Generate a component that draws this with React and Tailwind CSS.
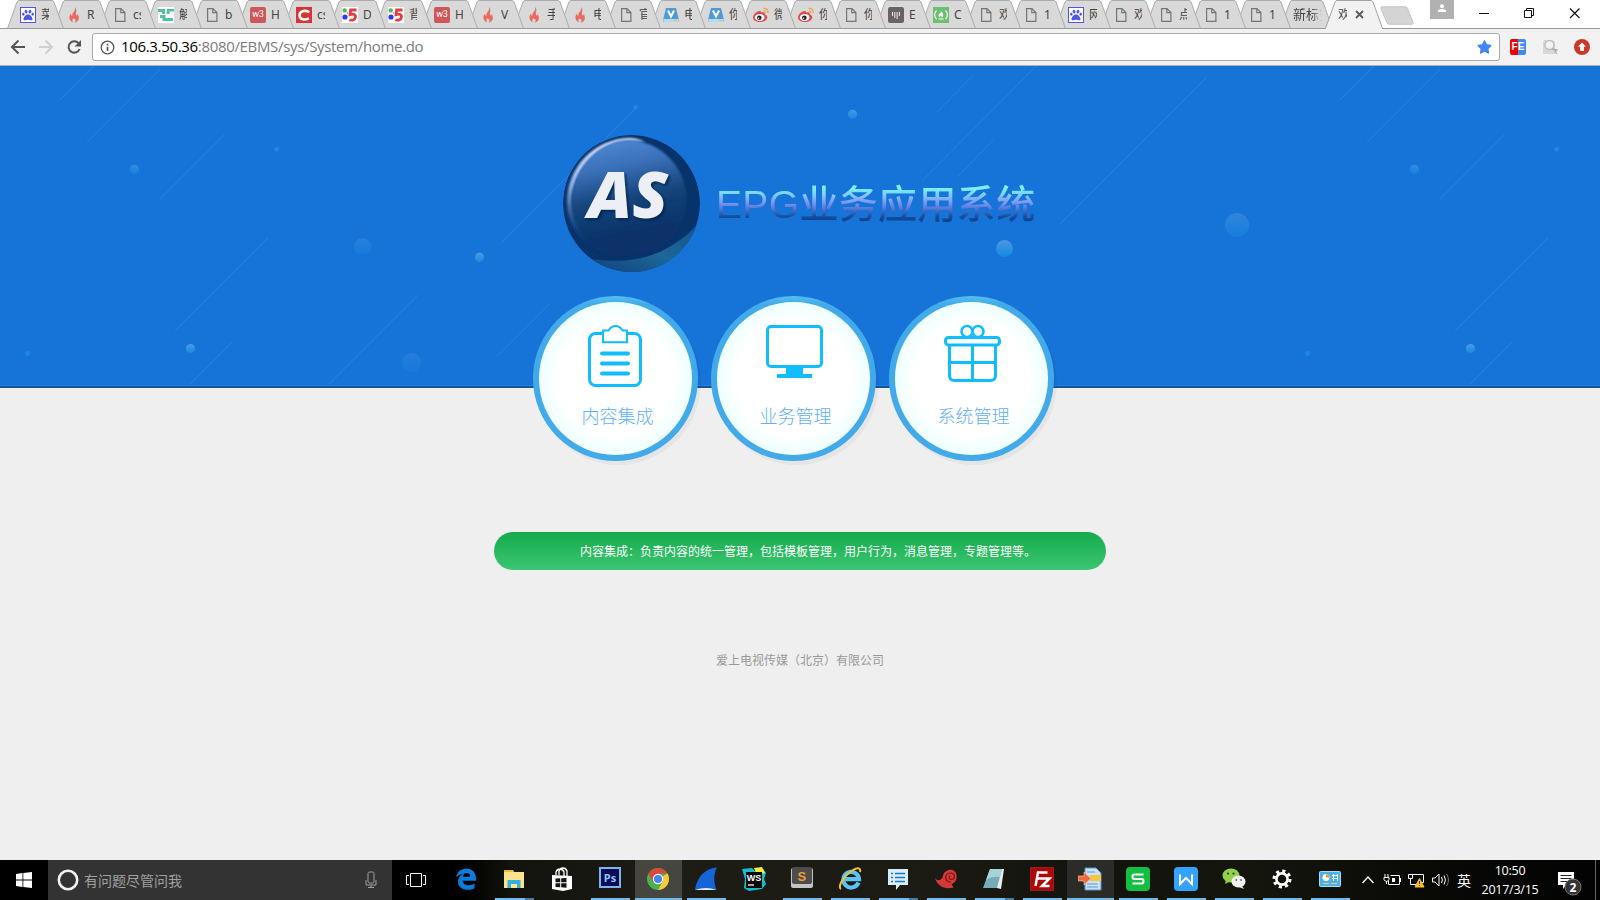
import React from "react";
import { FaPaw, FaStar } from "react-icons/fa";

/* ---------- favicons ---------- */

const Baidu = () => (
  <span className="flex h-4 w-4 items-center justify-center border border-[#4f57e8] bg-white">
    <FaPaw className="h-3 w-3 text-[#4f57e8]" />
  </span>
);
const Fire = () => (
  <svg className="h-4 w-4" viewBox="0 0 16 16">
    <path d="M9 0c.6 2.600-.6 4-1.700 5.400C6.300 7 6 8 6.500 9.300 5.400 8.800 5 7.600 5.100 6.600 3.600 8.200 3 10 3.700 12c.6 1.900 2 3.100 3.500 3.600-1.500-1.700-1-3.200.4-4.500.1 1.200.9 1.500 1.400 1 .9 1.100.6 2.400-.3 3.600 2.700-.7 4.300-2.700 4.200-5 0-1.500-.8-2.500-.9-3.800-.8.500-1 1.300-.9 2.100C10 8 9.600 7 10 5.400 10.600 3.200 10.600 1.500 9 0z" fill="#ea6a62" />
  </svg>
);
const Doc = () => (
  <svg className="h-4 w-4" viewBox="0 0 16 16" fill="none" stroke="#757575" strokeWidth="1.200">
    <path d="M3.600 1.600h5.400l3.900 3.900v8.900H3.600z M8.800 1.600v4.100h4.100" />
  </svg>
);
const Teal = () => (
  <svg className="h-4 w-4" viewBox="0 0 16 16">
    <rect width="16" height="16" fill="#fff" />
    <path d="M0 2h7v5H4V5H0zM9 2h7v2.500h-4.500V7H8.500zM2 8h5.500v3H15v3H4.500V11H2z" fill="#4fc0a2" />
  </svg>
);
const W3 = () => (
  <span className="flex h-4 w-4 items-center justify-center rounded-[2px] bg-[#cf5659] font-['Roboto',sans-serif] text-[9px] leading-none tracking-tight text-white">w3</span>
);
const CRed = () => (
  <svg className="h-4 w-4" viewBox="0 0 16 16">
    <rect width="16" height="16" fill="#d93434" />
    <path d="M13.300 5.300C10.500 3 3.800 3.200 3.500 8.200c-.2 4.800 5.500 5 9.500 3.200" fill="none" stroke="#fff" strokeWidth="2.600" />
  </svg>
);
const Five = () => (
  <svg className="h-4 w-4" viewBox="0 0 16 16">
    <rect width="16" height="16" fill="#fff" />
    <circle cx="2.700" cy="3.400" r="2.200" fill="#5cb55c" />
    <circle cx="3" cy="10" r="2.600" fill="#3038ff" />
    <circle cx="5.500" cy="6" r=".8" fill="#e66" />
    <path d="M14.500 3H8.600l-.5 4.600c3.500-1 5.700 0 5.300 2.600-.4 2.800-3.200 3.600-6 2.500" fill="none" stroke="#df3f44" strokeWidth="2.800" />
  </svg>
);
const Disk = () => (
  <svg className="h-4 w-4" viewBox="0 0 16 16">
    <path d="M3 1h10l2.500 10V15H.5V11z" fill="#4f9bd8" />
    <path d="M.5 12h15v3H.5z" fill="#b7d8ef" />
    <rect x="11" y="13" width="3" height="1" fill="#e8c53a" />
    <path d="M5 3.500l3 6 3-6" fill="none" stroke="#fff" strokeWidth="2" />
  </svg>
);
const Weibo = () => (
  <svg className="h-4 w-4" viewBox="0 0 16 16">
    <path d="M6.800 4C4 4 0 7.200 0 10.500 0 13.300 3.200 15 7 15c4 0 7.300-2.200 7.300-4.800 0-1.800-1.600-2.600-2.600-2.800.6-2-.8-2.900-3.700-1.800C8.300 4.500 8 4 6.800 4z" fill="#e24b4f" />
    <ellipse cx="6.700" cy="10.500" rx="4.800" ry="3.400" fill="#fff" />
    <circle cx="6.300" cy="10.700" r="2.300" fill="#222" />
    <circle cx="5.600" cy="11.200" r=".8" fill="#fff" />
    <path d="M10.500 1.400c3-.5 5 1.600 4.600 4.600M10.800 4c1.400-.2 2.100.6 2 1.900" fill="none" stroke="#f0a43c" strokeWidth="1.300" />
  </svg>
);
const Bars = () => (
  <svg className="h-4 w-4" viewBox="0 0 16 16">
    <rect width="16" height="16" rx="2" fill="#6b6269" />
    <path d="M4.500 5v4M6.800 5v6M9.100 5v7M11.400 5v4" stroke="#eee" strokeWidth="1" />
  </svg>
);
const Camp = () => (
  <svg className="h-4 w-4" viewBox="0 0 16 16">
    <rect width="16" height="16" fill="#6abf70" />
    <path d="M3.500 3.500C1 6 1 9.500 3.500 12M12.500 3.500C15 6 15 9.500 12.500 12M5.500 12h5" fill="none" stroke="#fff" strokeWidth="1.100" />
    <path d="M8 4c.5 1.500 2.600 2.500 2.200 4.500C10 10 9 10.500 8.500 10.500 9 9 8 9 7.600 8c0 1-.8 1.400-.2 2.500C5 10 5.300 7.500 6.700 6.500 7.500 6 8 5 8 4z" fill="#fff" />
  </svg>
);

const TABS = [
  [Baidu, "菜"], [Fire, "R"], [Doc, "cs"], [Teal, "解"], [Doc, "b"], [W3, "H"], [CRed, "cs"],
  [Five, "D"], [Five, "背"], [W3, "H"], [Fire, "V"], [Fire, "手"], [Fire, "电"], [Doc, "官"],
  [Disk, "电"], [Disk, "你"], [Weibo, "微"], [Weibo, "你"], [Doc, "你"], [Bars, "E"], [Camp, "C"],
  [Doc, "欢"], [Doc, "1"], [Baidu, "网"], [Doc, "欢"], [Doc, "点"], [Doc, "1"], [Doc, "1"],
];

function TabShape({ w, active }) {
  const d = `M0.500 28.500 L10 2 Q10.800 0.500 12 0.500 H${w - 12} Q${w - 10.800} 0.500 ${w - 10} 2 L${w - 0.500} 28.500`;
  return (
    <svg className="absolute inset-0" width={w} height="29">
      <path d={d} fill={active ? "#f2f2f2" : "#d9d9d9"} stroke={active ? "#a3a3a3" : "#acacac"} strokeWidth="1" />
      {active ? <path d={`M1 28.500H${w - 1}`} stroke="#f2f2f2" /> : <path d={`M0 28.500H${w}`} stroke="#999" />}
    </svg>
  );
}

function TabStrip() {
  return (
    <div className="flex h-[29px] bg-white pl-[7px] font-['Noto_Sans','Noto_Sans_CJK_SC',sans-serif] text-[12px] text-[#444] shadow-[inset_0_-1px_0_#999]">
      {TABS.map(([Icon, label], i) => (
        <div key={i} className={"relative -mr-[11px] h-[29px] shrink-0 " + (i < 13 ? "w-[57px]" : "w-[56px]")} style={{ zIndex: 40 - i }}>
          <TabShape w={i < 13 ? 57 : 56} />
          <div className="relative flex h-[29px] items-center pl-[13px]">
            <Icon />
            <span className="ml-[5px] w-[8px] overflow-hidden whitespace-nowrap">{label}</span>
          </div>
        </div>
      ))}
      <div className="relative -mr-[8px] h-[29px] w-[53px] shrink-0">
        <TabShape w={53} />
        <div className="relative flex h-[29px] items-center pl-[13px] text-[13px]">
          <span className="w-[29px] overflow-hidden whitespace-nowrap [mask-image:linear-gradient(90deg,#000_65%,transparent)]">新标签</span>
        </div>
      </div>
      <div className="relative z-50 h-[29px] w-[58px] shrink-0">
        <TabShape w={58} active />
        <div className="relative flex h-[29px] items-center pl-[13px]">
          <span className="w-[9px] overflow-hidden whitespace-nowrap">欢</span>
          <svg className="ml-[8px] h-[9px] w-[9px]" viewBox="0 0 9 9"><path d="M1 1l7 7M8 1L1 8" stroke="#5a5a5a" strokeWidth="1.800" /></svg>
        </div>
      </div>
      <svg className="-ml-[4px] mt-[6px] shrink-0" width="38" height="20">
        <path d="M3 .8h23q2 0 2.600 1.500l5.400 14q.7 2-1.200 2H10.500q-2 0-2.600-1.600L1.900 2.500Q1.300 .8 3 .8z" fill="#d4d4d4" stroke="#c6c6c6" />
      </svg>
      <div className="ml-auto flex">
        <div className="flex h-[19px] w-[24px] justify-center bg-[#b1b1b1] pt-[4px]">
          <svg width="8" height="9" viewBox="0 0 8 9"><circle cx="4" cy="2.200" r="2" fill="#fff" /><path d="M0 8V6.700Q0 5 4 5T8 6.700V8z" fill="#fff" /></svg>
        </div>
        <svg className="mr-[10px]" width="136" height="28" viewBox="0 0 136 28" fill="none" stroke="#111" strokeWidth="1">
          <path d="M25 13.500h10M70.500 10.500h7v7h-7zM72.500 10.500v-2h7v7h-2" />
          <path d="M116 8.500l9.500 9.500M125.500 8.500L116 18" strokeWidth="1.200" />
        </svg>
      </div>
    </div>
  );
}

function Toolbar() {
  return (
    <div className="flex h-[37px] items-center border-b border-[#a9b0ba] bg-[#f2f2f2] pl-[10px]">
      <svg width="74" height="20" viewBox="0 0 74 20" fill="none" strokeWidth="2">
        <path d="M15 10H2.500M8.500 3.500L2 10l6.500 6.500" stroke="#555" />
        <path d="M29 10h12.500M35.500 3.500L42 10l-6.500 6.500" stroke="#d0d0d0" />
        <path d="M68.600 6.200A5.700 5.700 0 1 0 69.600 12" stroke="#555" />
        <path d="M71 3v6.500h-6.500z" fill="#555" />
      </svg>
      <div className="ml-[8px] flex h-[28px] w-[1408px] items-center rounded-[3px] border border-[#a8a8a8] bg-white pl-[7px]">
        <svg width="15" height="15" viewBox="0 0 15 15"><circle cx="7.500" cy="7.500" r="6.300" fill="none" stroke="#555" strokeWidth="1.300" /><path d="M7.500 6.700v4.300M7.500 3.800v1.600" stroke="#555" strokeWidth="1.700" /></svg>
        <span className="mb-[2px] ml-[6px] whitespace-nowrap font-['Open_Sans','Noto_Sans',sans-serif] text-[15px] leading-none tracking-[-0.33px] text-[#7b7b7b]">
          <span className="text-black">106.3.50.36</span>:8080/EBMS/sys/System/home.do
        </span>
        <FaStar className="ml-auto mr-[7px] h-[14px] w-[15px] text-[#4285f4]" />
      </div>
      <div className="ml-[10px] flex gap-[16px]">
        <span className="flex h-4 w-4 items-center justify-center rounded-[2px] bg-[linear-gradient(90deg,#f00000_50%,#3f8bf5_50%)] font-['Liberation_Sans',sans-serif] text-[10px] font-bold leading-none text-white">FE</span>
        <svg width="16" height="16" viewBox="0 0 16 16"><path d="M2 1h9l2 3v9l1 2H1V3z" fill="#d8d8d8" /><circle cx="7.500" cy="6" r="4.500" fill="#f3f3f3" stroke="#bdbdbd" strokeWidth="1.400" /><path d="M10 10l5 1-2 1 2 3" stroke="#aaa" fill="none" strokeWidth="1.300" /></svg>
        <svg width="16" height="16" viewBox="0 0 16 16"><circle cx="8" cy="8" r="8" fill="#c73a2b" /><path d="M8 3.500l4 4.200H9.800V12H6.200V7.700H4z" fill="#fff" /></svg>
      </div>
    </div>
  );
}

/* ---------- page ---------- */

const LINES = [
  [60, 34, 94, 0], [87, 76, 160, 3], [160, 133, 224, 69], [175, 265, 268, 172], [190, 318, 232, 276],
  [329, 318, 418, 229], [501, 177, 635, 43], [497, 290, 550, 237], [937, 46, 973.500, 9],
  [922, 115, 1036, 0], [957, 111, 993.500, 74], [1060, 158, 1207, 11], [1340, 34, 1374, 0],
  [1367, 76, 1440, 3], [1440, 133, 1504, 69], [1455, 265, 1548, 172], [1470, 318, 1512, 276],
];
const DOTS = [
  [134.500, 103.300, 4.600, 0.6], [276.500, 83.300, 2.500, 0.3], [362.500, 180.500, 8.600, 0.3], [479.500, 191.300, 4.600, 1],
  [190.500, 282.500, 4.600, 1], [27.500, 287.500, 2.500, 0.3], [411.500, 296.500, 9.700, 0.25], [635.400, 41.300, 2.500, 0.4],
  [852.500, 48.300, 4.600, 0.9], [1004.500, 182.500, 8.500, 0.9], [1237, 159, 12, 0.45], [1414.500, 103.300, 4.600, 0.6],
  [1556.500, 83.300, 2.500, 0.3], [1470.500, 282.500, 4.600, 1], [1307.500, 287.500, 2.500, 0.3],
];

function Backdrop() {
  return (
    <svg className="absolute inset-0" width="1600" height="322">
      <defs>
        <linearGradient id="dot" x1="0" y1="0" x2="0" y2="1">
          <stop offset="0" stopColor="#509be0" />
          <stop offset="1" stopColor="#148be6" />
        </linearGradient>
      </defs>
      {LINES.map(([a, b, c, d], i) => <path key={i} d={`M${a} ${b}L${c} ${d}`} stroke="#2389e6" strokeOpacity=".75" strokeWidth="1" />)}
      <path d="M373 251L439 185" stroke="#2380df" strokeOpacity=".4" />
      {DOTS.map(([x, y, r, o], i) => <circle key={i} cx={x} cy={y} r={r} fill={r < 3 ? "#1f9bf0" : "url(#dot)"} fillOpacity={r < 3 ? 0.5 : o} />)}
      <path d="M0 319.500H1600" stroke="#2a7fdc" />
      <path d="M0 321H1600" stroke="#11559f" strokeWidth="2" />
    </svg>
  );
}

function Logo() {
  return (
    <svg width="138" height="138" viewBox="0 0 138 138" className="shrink-0">
      <defs>
        <linearGradient id="face" x1=".4" y1="0" x2=".6" y2="1">
          <stop offset="0" stopColor="#4c86d4" />
          <stop offset=".22" stopColor="#3a70b8" />
          <stop offset=".5" stopColor="#144479" />
          <stop offset=".8" stopColor="#08326a" />
        </linearGradient>
        <linearGradient id="rim" x1=".3" y1="0" x2=".35" y2="1">
          <stop offset="0" stopColor="#eaf2ff" />
          <stop offset=".4" stopColor="#8db3e8" />
          <stop offset=".8" stopColor="#1f4f92" stopOpacity=".4" />
          <stop offset="1" stopColor="#08306a" stopOpacity="0" />
        </linearGradient>
        <linearGradient id="glow" x1="0" y1="1" x2="1" y2="0">
          <stop offset="0" stopColor="#0f3f78" />
          <stop offset=".5" stopColor="#1d6799" />
          <stop offset="1" stopColor="#14508a" />
        </linearGradient>
        <filter id="soft"><feGaussianBlur stdDeviation="1" /></filter>
        <clipPath id="disc"><circle cx="68.500" cy="68.500" r="68.500" /></clipPath>
      </defs>
      <g clipPath="url(#disc)">
        <circle cx="68.500" cy="68.500" r="68.500" fill="#07336b" />
        <path d="M28 124Q76 131 108 111Q128 99 138 84V138H20z" fill="url(#glow)" />
        <path d="M66 3A64 64 0 0 0 4 66C4 90 18 108 36 119L40 115C20 100 9 85 9 66C9 40 32 8 66 6L82 7Q74 3 66 3z" fill="url(#rim)" filter="url(#soft)" />
        <path d="M66 5C96 6 123 30 123.500 64C124 86 114 100 100 112Q70 126 40 119C20 106 9 88 9 66C9 34 36 5 66 5z" fill="url(#face)" filter="url(#soft)" />
      </g>
      <g fontFamily="'Open Sans','Noto Sans',sans-serif" fontWeight="800" fontStyle="italic" fontSize="64">
        <text x="27" y="85" fill="#04204a" opacity=".75" filter="url(#soft)" textLength="80" lengthAdjust="spacingAndGlyphs">AS</text>
        <text x="25" y="82.500" fill="#eceff5" textLength="80" lengthAdjust="spacingAndGlyphs">AS</text>
      </g>
    </svg>
  );
}

const Clipboard = () => (
  <svg width="58" height="64" viewBox="1 0 58 64" fill="none" stroke="#11bcff">
    <rect x="3.500" y="9.500" width="51" height="52" rx="6" strokeWidth="3" />
    <path d="M17 18.300V6.500h5.500C24 4 26 2 29.500 2S35 4 36.500 6.500H41V18.300z" fill="#fff" strokeWidth="2" />
    <path d="M16 29.500h26M16 39.500h26M16 49.500h26" strokeWidth="4" strokeLinecap="round" />
  </svg>
);
const Monitor = () => (
  <svg width="58" height="64" viewBox="-1 0 58 64">
    <rect x="1.500" y="2.500" width="54" height="40" rx="3.500" fill="#fff" stroke="#11bcff" strokeWidth="3" />
    <path d="M20 43h17v7h9v4H11v-4h9z" fill="#11bcff" />
  </svg>
);
const Gift = () => (
  <svg width="58" height="64" viewBox="-1 0 58 64" fill="none" stroke="#11bcff" strokeWidth="3">
    <circle cx="23" cy="7.500" r="5.500" strokeWidth="2.600" />
    <circle cx="34" cy="7.500" r="5.500" strokeWidth="2.600" />
    <path d="M5.500 21v30.500q0 5 5 5h36q5 0 5-5V21M28.500 21v36M5.500 38.500h46" />
    <rect x="1.500" y="13.500" width="54" height="7.500" rx="3" fill="#fff" />
  </svg>
);

function Card({ Icon, label }) {
  return (
    <div className="h-[165px] w-[165px] rounded-full bg-[linear-gradient(180deg,#55bfee_0,#43aaea_5%)] p-[6px] shadow-[3px_4px_0_rgba(0,0,0,0.04)]">
      <div className="flex h-full w-full flex-col items-center rounded-full bg-[radial-gradient(circle_at_50%_50%,#ffffff_52%,#edffff_72%)] pt-[22px]">
        <Icon />
        <span className="ml-[4px] mt-[13px] whitespace-nowrap font-['Noto_Sans_CJK_SC',sans-serif] text-[18px] font-light leading-[28px] text-[#5fb0fa]">{label}</span>
      </div>
    </div>
  );
}

/* ---------- taskbar ---------- */

const Edge = () => (
  <svg width="22" height="22" viewBox="0 0 22 22"><path d="M1 9.500C2 4 6 .5 11.300.5 17 .5 21 4.500 21 10.500v2.200H7.600c.3 3 3 4.500 6 4.500 2.300 0 4.200-.6 5.900-1.600v4.600c-2 1.100-4.200 1.600-6.900 1.600C7 21.800 3 18.500 3 13.500c0-3.200 1.700-5.700 4.500-7.200C4.500 6.500 2.300 7.700 1 9.500zm6.800-.8h7.400c0-2.400-1.200-3.700-3.500-3.700-2 0-3.400 1.300-3.900 3.700z" fill="#0b7bdc" /></svg>
);
const Explorer = () => (
  <svg width="22" height="20" viewBox="0 0 22 20"><path d="M1 1h9l1 2h10v16H1z" fill="#fde38c" /><path d="M1 1h9v2H1z" fill="#f0b93a" /><path d="M4.500 19v-8h13v8h-3.500v-4h-6v4z" fill="#35aee2" /></svg>
);
const Store = () => (
  <svg width="22" height="25" viewBox="0 0 22 25"><path d="M1 8l20 1v13l-9 2L1 22z" fill="#fff" /><path d="M5 8V5q1-3 4-3t4 3v4M8 8V4q1-3 4-3t4 3v5" fill="none" stroke="#fff" strokeWidth="1.300" /><path d="M4.500 11.500l4.700-.3v4H4.500zM10.200 11.200l5.300-.3v4.300h-5.300zM4.500 16.200h4.700v4l-4.700-.3zM10.200 16.200h5.300v4.500l-5.300-.4z" fill="#141410" /></svg>
);
const Ps = () => (
  <span className="mb-[3px] flex h-[21px] w-[22px] items-center justify-center border-2 border-[#7bb5f0] bg-[#0b0a55] font-['Open_Sans',sans-serif] text-[11px] font-bold leading-none text-[#8dc6ff]">Ps</span>
);
const Chrome = () => (
  <svg width="22" height="22" viewBox="0 0 22 22">
    <circle cx="11" cy="11" r="11" fill="#4caf50" />
    <path d="M11 11L1.500 5.500A11 11 0 0 1 20.500 5.500H11z" fill="#d9463a" />
    <path d="M11 11l9.500-5.500A11 11 0 0 1 11 22l5-9z" fill="#fbc934" />
    <path d="M1.500 5.500L6 14l5-3-1-5.500z" fill="#d9463a" />
    <circle cx="11" cy="11" r="5.200" fill="#fff" /><circle cx="11" cy="11" r="4.100" fill="#4285f4" />
  </svg>
);
const Shark = () => (
  <svg width="24" height="24" viewBox="0 0 24 24"><path d="M1 23C3 9 12 1 23 .5 19 8 20 16 22.500 23z" fill="#1565d8" /><path d="M1 23q11-4 21.500 0z" fill="#e2effa" /></svg>
);
const WebStorm = () => (
  <svg width="24" height="24" viewBox="0 0 24 24"><path d="M0 2l10-1 3 3 8-2 3 4-2 6 2 5-4 5-13 2-5-3 1-9z" fill="#14bfd0" /><path d="M12 1l8-1 3 6-8 2z" fill="#f4ee43" /><rect x="4" y="5" width="16" height="16" fill="#080808" /><text x="4.800" y="13.500" fontSize="9" fontWeight="700" fontFamily="'Liberation Sans'" fill="#fff" textLength="14.500" lengthAdjust="spacingAndGlyphs">WS</text><path d="M6 18h6" stroke="#fff" strokeWidth="1.300" /></svg>
);
const Sublime = () => (
  <svg className="-mt-[3px]" width="24" height="22" viewBox="0 0 24 22"><rect x="1" y="1" width="22" height="20" rx="2" fill="#c4c4c4" /><rect x="2" y="0" width="20" height="17" rx="2" fill="#4c4c4c" /><text x="7.500" y="13.500" fontSize="13" fontWeight="700" fontFamily="'Liberation Sans'" fill="#f29a3a">S</text></svg>
);
const Ie = () => (
  <svg width="24" height="24" viewBox="0 0 24 24"><path d="M20.500 15.500A7.800 7.800 0 1 1 21 12.200H7" fill="none" stroke="#5cc3f2" strokeWidth="4.200" /><path d="M3 22C-1 20 6 8 15 3c5-3 8-2 7 2" fill="none" stroke="#f3c22e" strokeWidth="2" /></svg>
);
const Message = () => (
  <svg width="22" height="21" viewBox="0 0 22 21"><path d="M1 0h20v16H13l-4 5v-5H1z" fill="#d9edfb" /><path d="M4 4.500h2M8 4.500h10M4 8.500h2M8 8.500h10M4 12.500h2M8 12.500h10" stroke="#1876cf" strokeWidth="1.600" /></svg>
);
const Snail = () => (
  <svg width="22" height="20" viewBox="0 0 22 20"><path d="M0 9c3 4 7 2 8-2C9 0 20-2 21.500 6c.8 5-2 8-5 9l2 3.500C10 21 2 17 0 9z" fill="#d23a3a" /><path d="M16 13c-7 0-7-9-.5-9 5 0 5 6.500 1 6.500-3 0-3-3.500-1-3.500" fill="none" stroke="#7c1216" strokeWidth="1.200" /></svg>
);
const Notepad = () => (
  <svg width="22" height="22" viewBox="0 0 22 22"><path d="M7 1h14l-3 20-4-1z" fill="#e8efef" /><path d="M7 1h12l-5 19H0z" fill="#74adb8" /><path d="M7 1h12l-2 8Q9 8 3 12z" fill="#a6d2d9" /></svg>
);
const Fz = () => (
  <svg width="24" height="24" viewBox="0 0 24 24"><rect x=".5" y=".5" width="23" height="23" fill="#ad0707" stroke="#dd2a2a" strokeDasharray="1 1" /><path d="M5.500 19L8 5.500h9.500M7 11.500h7M12.500 11.500h7L12 19h7.500" fill="none" stroke="#fff" strokeWidth="2.500" /></svg>
);
const DocArrow = () => (
  <svg width="24" height="24" viewBox="0 0 24 24"><path d="M7 1h11l5 5v17H7z" fill="#c9e2f6" stroke="#5b93cd" /><path d="M9 5h8M9 17h11M9 20h11" stroke="#5a9bdc" /><path d="M12 8h11v6H12z" fill="#f6c443" /><path d="M0 9h6V5l7 6.500L6 18v-4H0z" fill="#ee6a3a" stroke="#fcd0b8" strokeWidth=".6" /></svg>
);
const WpsS = () => (
  <svg width="24" height="24" viewBox="0 0 24 24"><rect width="24" height="24" rx="4" fill="#13bf40" /><path d="M17.500 7.500H8.500q-2 0-2 2.200t2 2.300h7q2 0 2 2.200t-2 2.300H6.500" fill="none" stroke="#fff" strokeWidth="2" /></svg>
);
const WpsW = () => (
  <svg width="24" height="24" viewBox="0 0 24 24"><rect width="24" height="24" rx="4" fill="#34a2ff" /><path d="M6 7.500V17l6-6 6 6V7.500" fill="none" stroke="#fff" strokeWidth="2" /></svg>
);
const WeChat = () => (
  <svg width="24" height="22" viewBox="0 0 24 22"><ellipse cx="9" cy="7.500" rx="8.500" ry="7" fill="#93d14b" /><path d="M4 12l-1 4 4-2z" fill="#93d14b" /><ellipse cx="16.500" cy="13.500" rx="7" ry="6" fill="#f1f1f1" /><path d="M20 18l2 3-5-2z" fill="#f1f1f1" /><circle cx="6" cy="5.500" r="1.100" fill="#333" /><circle cx="11.500" cy="5.500" r="1.100" fill="#333" /><circle cx="14.300" cy="12" r=".9" fill="#666" /><circle cx="19" cy="12" r=".9" fill="#666" /></svg>
);
const Gear = () => (
  <svg width="20" height="20" viewBox="0 0 20 20"><circle cx="10" cy="10" r="5.600" fill="none" stroke="#fff" strokeWidth="2.600" /><circle cx="10" cy="10" r="8" fill="none" stroke="#fff" strokeWidth="3" strokeDasharray="3.140 3.140" /></svg>
);
const Panel = () => (
  <svg width="22" height="16" viewBox="0 0 22 16"><rect x=".5" y=".5" width="21" height="15" rx="1" fill="#4bb0e8" stroke="#a5dcf8" /><circle cx="7" cy="6.500" r="3.500" fill="#fff" /><path d="M7 6.500V3a3.500 3.500 0 0 1 3.500 3.500z" fill="#f29b33" /><path d="M13 4.500h6M13 7.500h6M14.500 3v7M18.500 3v7" stroke="#e9f7ff" /><path d="M4 12.500h14" stroke="#f0d060" strokeDasharray="6 2" /></svg>
);

const APPS = [
  [Edge, 0], [Explorer, 2], [Store, 0], [Ps, 1], [Chrome, 3], [Shark, 1], [WebStorm, 0], [Sublime, 1], [Ie, 1], [Message, 2],
  [Snail, 1], [Notepad, 2], [Fz, 1], [DocArrow, 3], [WpsS, 1], [WpsW, 1], [WeChat, 1], [Gear, 1], [Panel, 1],
];
const BAR = {
  0: "h-[2px] w-0",
  1: "h-[2px] w-[39px] bg-[#76b9ed]",
  2: "h-[2px] w-[39px] bg-[linear-gradient(90deg,#76b9ed_78%,#4c7ba0_78%)]",
  3: "h-[2px] w-[47px] bg-[#76b9ed]",
};

function Taskbar() {
  return (
    <div className="flex h-[40px] bg-[linear-gradient(90deg,#000_0,#000_29%,#12130d_32%,#1d1c15_42%,#1b1b14_58%,#12130c_68%,#14160d_78%,#0a0b07_88%,#020202_100%)] text-white">
      <div className="flex w-[48px] items-center justify-center">
        <svg width="16" height="16" viewBox="0 0 16 16"><path d="M0 2l6.500-.9v6.400H0zM7.300 1L16 0v7.500H7.300zM0 8.400h6.500v6.500L0 14zM7.300 8.400H16V16l-8.700-1z" fill="#fff" /></svg>
      </div>
      <div className="flex w-[344px] items-center bg-[#333] pl-[9px]">
        <svg width="22" height="22" viewBox="0 0 22 22"><circle cx="11" cy="11" r="9.200" fill="none" stroke="#f2f2f2" strokeWidth="2.600" /></svg>
        <span className="ml-[5px] font-['Noto_Sans_CJK_SC',sans-serif] text-[14px] leading-none text-[#a0a0a0]">有问题尽管问我</span>
        <svg className="ml-auto mr-[15px]" width="12" height="18" viewBox="0 0 12 18" fill="none" stroke="#a0a0a0"><rect x="3" y="1" width="6" height="11" rx="1.500" /><path d="M1 9v5h10V9M6 14v3M3 16.500h6" /></svg>
      </div>
      <div className="flex w-[50px] items-center justify-center pr-[2px]">
        <svg width="20" height="16" viewBox="0 0 20 16" fill="none" stroke="#fff"><path d="M4.500 1.500h11v13h-11zM3 3.500H.5v9H3M17 3.500h2.500v9H17" /></svg>
      </div>
      {APPS.map(([Icon, state], i) => (
        <div key={i} className="flex w-[48px] flex-col items-center">
          <div className={"flex h-[38px] w-[47px] items-center justify-center " + (state === 3 ? (i === 4 ? "bg-[#464640]" : "bg-[#2b2c27]") : "")}><Icon /></div>
          <div className={BAR[state]} />
        </div>
      ))}
      <svg className="ml-[7px]" width="96" height="40" viewBox="0 0 96 40" fill="none" stroke="#fff">
        <path d="M1.500 23l5.500-6 5.500 6" strokeWidth="1.300" />
        <path d="M29.500 15.500h9v9H27.500V21M39.500 18v4M24 14v3M27 14v3M23 17.500h5v2q-1 2-2.500 2t-2.500-2zM25.500 21v3" />
        <path d="M31 18h3v4h-3z" fill="#fff" stroke="none" />
        <path d="M51.500 14.500h11v8h-6M47.500 14.500h4v4h-4zM49.500 18.500v6h6" />
        <path d="M58.500 18.500l4.500 8.500h-9z" fill="#f9be1f" stroke="#f9be1f" /><path d="M58.500 21v3M58.500 25v1" stroke="#333" />
        <path d="M71.500 18h2.500l4-4v12l-4-4h-2.500z" /><path d="M80.500 17q1.800 3 0 6M83 15.500q3 4.500 0 9" /><path d="M85.500 14q4 6 0 12" stroke="#777" />
      </svg>
      <div className="flex w-[14px] items-center whitespace-nowrap font-['Noto_Sans_CJK_SC',sans-serif] text-[14px] leading-none">英</div>
      <div className="ml-[6px] flex w-[66px] flex-col items-center justify-center whitespace-nowrap font-['Open_Sans',sans-serif] text-[12.5px] leading-[19px] tracking-[-0.25px]">
        <span>10:50</span>
        <span>2017/3/15</span>
      </div>
      <svg className="ml-[14px]" width="28" height="40" viewBox="0 0 28 40">
        <path d="M1 12h16v13H9l-3 4v-4H1z" fill="#fff" /><path d="M3.500 15.500h11M3.500 18.500h11M3.500 21.500h7" stroke="#222" />
        <circle cx="16" cy="27" r="8" fill="#333" stroke="#777" />
        <text x="16" y="31.500" textAnchor="middle" fontFamily="'Open Sans'" fontWeight="700" fontSize="12" fill="#fff">2</text>
      </svg>
      <div className="ml-auto mr-[4px] w-px bg-[#666]" />
    </div>
  );
}

export default function App() {
  return (
    <div className="flex h-[900px] w-[1600px] flex-col overflow-hidden bg-[#efefef]">
      <TabStrip />
      <Toolbar />
      <header className="relative h-[322px] shrink-0 bg-[#1673d8]">
        <Backdrop />
        <div className="relative flex pl-[563px] pt-[69px]">
          <Logo />
          <h1 className="ml-[15px] mt-[44px] flex h-[52px] items-center whitespace-nowrap bg-[linear-gradient(180deg,#7df0ff_18%,#7dc8ff_32%,#7d93f2_46%,#4d76d4_58%,#164f9f_72%,#0a3f88_84%)] bg-clip-text font-['Liberation_Sans','Noto_Sans_CJK_SC',sans-serif] text-[39px] font-medium leading-[52px] tracking-[0.35px] text-transparent">EPG业务应用系统</h1>
        </div>
      </header>
      <main className="relative flex flex-1 flex-col items-center">
        <div className="-mt-[92px] flex gap-[13px] pr-[13px]">
          <Card Icon={Clipboard} label="内容集成" />
          <Card Icon={Monitor} label="业务管理" />
          <Card Icon={Gift} label="系统管理" />
        </div>
        <div className="mt-[71px] flex h-[38px] w-[612px] items-center justify-center rounded-full bg-[linear-gradient(180deg,#14aa4b,#3cc672)] pl-[16px] font-['Noto_Sans_CJK_SC',sans-serif] text-[12px] text-white">
          内容集成：负责内容的统一管理，包括模板管理，用户行为，消息管理，专题管理等。
        </div>
        <footer className="mt-[81px] font-['Noto_Sans_CJK_SC',sans-serif] text-[12px] leading-[18px] text-[#999]">爱上电视传媒（北京）有限公司</footer>
      </main>
      <Taskbar />
    </div>
  );
}
